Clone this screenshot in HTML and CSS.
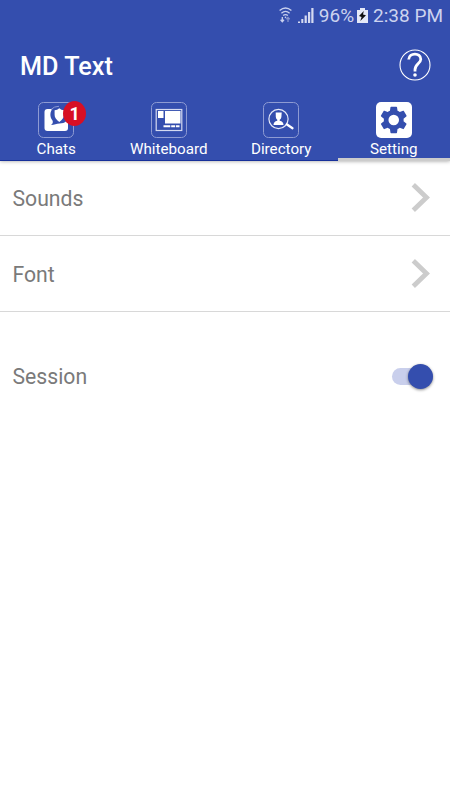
FILE: index.html
```html
<!DOCTYPE html>
<html lang="en">
<head>
<meta charset="utf-8">
<title>MD Text</title>
<link rel="stylesheet" href="styles.css">
</head>
<body>
<header class="header">
  <div class="status">
    <svg class="wifi" width="13" height="18" viewBox="0 0 13 18" fill="none" stroke="#c9d0ee" stroke-width="1.3">
      <path d="M.6 3.6Q6.5-1.6 12.4 3.6M2.4 6.2Q6.5 2.6 10.6 6.2M4.1 8.6Q6.5 6.6 8.9 8.6"/>
      <circle cx="6.5" cy="10.4" r=".8" fill="#c9d0ee" stroke="none"/>
      <path d="M3.3 10v4.5M1.6 12.8l1.7 1.9L5 12.8"/>
      <path stroke="#8592cf" d="M9 15v-4.5M7.4 12.2L9 10.4l1.7 1.8"/>
    </svg>
    <svg class="signal" width="16" height="16" viewBox="0 0 16 16" fill="#d5daf1">
      <path d="M0 13.500h2V15H0zM3.300 11h2v4h-2zM6.600 7.500h2.200V15H6.600zM10 4h2.200v11H10zM13.300 0h2.200v15h-2.200z"/>
    </svg>
    <span class="percent">96%</span>
    <svg class="battery" width="11" height="16" viewBox="0 0 11 16">
      <path fill="#e4e8f7" d="M3 0h5v2h3v13H0V2h3z"/>
      <path fill="#111" d="M6.800 3L2 8.100l2.600.8L3.300 13 9 7.200l-3-.7z"/>
    </svg>
    <span class="clock">2:38 PM</span>
  </div>
  <div class="titlebar">
    <h1 class="title">MD Text</h1>
    <svg width="32" height="32" viewBox="0 0 32 32" fill="none" stroke="#fff">
      <circle cx="16" cy="16" r="15" stroke-width="1.100"/>
      <path d="M9.700 10.500C10 3.300 22 3.300 21.800 10.200C21.700 14.300 16 15 16 20.800V22.500" stroke-width="2.800"/>
      <circle cx="16" cy="26" r="1.800" fill="#fff" stroke="none"/>
    </svg>
  </div>
  <nav class="tabs">
    <a class="tab">
      <span class="icon">
        <svg width="36" height="36" viewBox="0 0 36 36">
          <rect x=".5" y=".5" width="35" height="35" rx="5" fill="none" stroke="#8e9bd3"/>
          <path fill="#fff" d="M9.500 7H27q3 0 3 3v16q0 3-3 3H9.500q-3 0-3-3V10q0-3 3-3z"/>
          <path fill="#344eae" d="M14.500 18.500C11.500 15 11.800 9 15 6.500Q17.500 4.500 21 4.500c6 0 10 4 10 8.500 0 5-4 8.500-9.500 8.500-3 0-5 1.200-8.500 1.500 1.800-1.300 2.200-2.700 1.500-4.500z"/>
          <path fill="#fff" d="M21.300 6.300q2 1.800 4.700 2v4.500q0 4-4.700 7.200-4.700-3.200-4.700-7.200V8.300q2.700-.2 4.700-2z"/>
          <path fill="none" stroke="#8e9bd3" d="M13 7.500Q16 4.300 21 4.300"/>
        </svg>
        <b class="badge">1</b>
      </span>
      <span class="label">Chats</span>
    </a>
    <a class="tab">
      <svg width="36" height="36" viewBox="0 0 36 36">
        <rect x=".5" y=".5" width="35" height="35" rx="5" fill="none" stroke="#8e9bd3"/>
        <rect x="5.200" y="7.500" width="25.600" height="21" fill="none" stroke="#d5daf1" stroke-width="1.200"/>
        <path fill="#fff" d="M7 9h5.500v7H7zM14 9h15.500v12.500H14zM12.500 23.300h6.800v2h-6.800zM20.200 23.300h4v2h-4zM25 23.300h3.500v2H25z"/>
      </svg>
      <span class="label">Whiteboard</span>
    </a>
    <a class="tab">
      <svg width="36" height="36" viewBox="0 0 36 36">
        <rect x=".5" y=".5" width="35" height="35" rx="5" fill="none" stroke="#8e9bd3"/>
        <circle cx="15.500" cy="17" r="9.600" fill="none" stroke="#e4e8f7" stroke-width="1.200"/>
        <path fill="#fff" d="M12.700 10.500h6l-.3 4.500q-.3 2-1.700 2.800v1q3.800.8 3.800 4.200h-10q0-3.400 3.800-4.200v-1q-1.300-.8-1.500-2.800z"/>
        <path stroke="#fff" stroke-width="2.300" stroke-linecap="round" d="M24 22.500l5.500 3.700"/>
      </svg>
      <span class="label">Directory</span>
    </a>
    <a class="tab active">
      <svg width="36" height="36" viewBox="0 0 36 36">
        <rect width="36" height="36" rx="5" fill="#fff"/>
        <path transform="translate(1.900 2.100) scale(1.320)" fill="#344eae" fill-rule="evenodd" d="M19.430 12.980c.04-.32.07-.64.07-.98s-.03-.66-.07-.98l2.110-1.650c.19-.15.24-.42.12-.64l-2-3.460c-.12-.22-.39-.3-.61-.22l-2.490 1c-.52-.4-1.080-.73-1.690-.98l-.38-2.650C14.460 2.180 14.250 2 14 2h-4c-.25 0-.46.18-.49.42l-.38 2.650c-.61.25-1.170.59-1.690.98l-2.490-1c-.23-.09-.49 0-.61.22l-2 3.460c-.13.22-.07.49.12.64l2.110 1.650c-.04.32-.07.65-.07.98s.03.66.07.98l-2.110 1.650c-.19.15-.24.42-.12.64l2 3.460c.12.22.39.3.61.22l2.490-1c.52.4 1.080.73 1.690.98l.38 2.650c.03.24.24.42.49.42h4c.25 0 .46-.18.49-.42l.38-2.650c.61-.25 1.170-.59 1.690-.98l2.490 1c.23.09.49 0 .61-.22l2-3.460c.12-.22.07-.49-.12-.64zM12 16a4 4 0 1 1 0-8 4 4 0 0 1 0 8z"/>
      </svg>
      <span class="label">Setting</span>
    </a>
  </nav>
</header>
<main>
  <div class="row">
    <span>Sounds</span>
    <svg width="20" height="30" viewBox="0 0 20 30" fill="none" stroke="#ccc" stroke-width="4.800"><path d="M2.300 1.800L15.500 14.500 2.300 27.200"/></svg>
  </div>
  <div class="row">
    <span>Font</span>
    <svg width="20" height="30" viewBox="0 0 20 30" fill="none" stroke="#ccc" stroke-width="4.800"><path d="M2.300 1.800L15.500 14.500 2.300 27.200"/></svg>
  </div>
  <div class="row session">
    <span>Session</span>
    <span class="switch"><i class="knob"></i></span>
  </div>
</main>
</body>
</html>
```
FILE: styles.css
```css
* { box-sizing: border-box; }
body {
  margin: 0;
  height: 800px;
  background: #fff;
  font-family: Roboto, sans-serif;
  overflow: hidden;
}
.header {
  height: 160px;
  background: #344eae;
  color: #fff;
  box-shadow: 0 1px 4px rgba(0, 0, 0, .4);
}
.status {
  height: 32px;
  display: flex;
  align-items: center;
  justify-content: flex-end;
  padding-right: 7px;
  color: #ccd3ef;
  font-size: 19px;
  line-height: 32px;
}
.wifi { margin-right: 6px; }
.signal { margin-right: 5px; }
.percent { margin-right: 3px; }
.battery { margin-right: 5px; }
.titlebar {
  height: 66px;
  display: flex;
  align-items: center;
  justify-content: space-between;
  padding: 0 19px 0 20px;
}
.title {
  margin: 2px 0 0;
  font-size: 25.200px;
  font-weight: 500;
}
.tabs {
  height: 62px;
  display: grid;
  grid-template-columns: repeat(4, 1fr);
}
.tab {
  display: flex;
  flex-direction: column;
  align-items: center;
  padding-top: 4px;
  border-bottom: 1px solid #17309a;
}
.active { border-bottom: 3px solid #ccc; }
.icon { position: relative; height: 36px; }
.badge {
  position: absolute;
  left: 25px;
  top: -1px;
  width: 23px;
  height: 25px;
  border-radius: 50%;
  background: #d70f24;
  font-size: 18px;
  line-height: 25px;
  text-align: center;
}
.label { font-size: 15.200px; line-height: 18px; margin-top: 2px; }
.row {
  height: 76px;
  display: flex;
  align-items: center;
  justify-content: space-between;
  padding: 1px 19.500px 0 12.500px;
  border-bottom: 1px solid #d8d8d8;
  color: #7a7a7a;
  font-size: 21.200px;
}
.session {
  margin-top: 26px;
  padding-right: 17px;
  border-bottom: 0;
}
.switch {
  position: relative;
  width: 41px;
  height: 17px;
  border-radius: 9px;
  background: #c9cfec;
}
.knob {
  position: absolute;
  right: 0;
  top: -4px;
  width: 25px;
  height: 25px;
  border-radius: 50%;
  background: #344eae;
  box-shadow: 0 1px 3px rgba(0, 0, 0, .45);
}
```
